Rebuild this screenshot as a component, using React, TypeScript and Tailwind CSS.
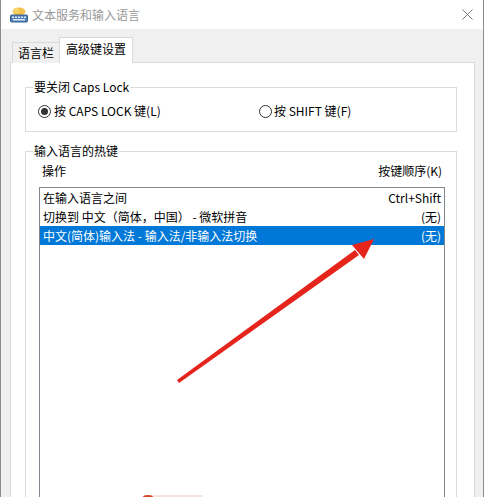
import React from "react";

const font = { fontFamily: '"Noto Sans CJK SC", "Noto Sans", sans-serif' };

const TitleIcon = () => (
  <svg width="18" height="16" viewBox="0 0 18 16">
    <ellipse cx="9" cy="4.5" rx="6.5" ry="4" fill="#f2c14e" />
    <ellipse cx="6" cy="3.5" rx="3" ry="2.5" fill="#f7d36b" />
    <rect x="0.5" y="8" width="17" height="7" rx="1" fill="#4f7fb8" stroke="#35608f" />
    <rect x="2" y="9.5" width="2" height="1.5" fill="#dfe9f5" />
    <rect x="5" y="9.5" width="2" height="1.5" fill="#dfe9f5" />
    <rect x="8" y="9.5" width="2" height="1.5" fill="#dfe9f5" />
    <rect x="11" y="9.5" width="2" height="1.5" fill="#dfe9f5" />
    <rect x="14" y="9.5" width="2" height="1.5" fill="#dfe9f5" />
    <rect x="3" y="12" width="12" height="1.5" fill="#dfe9f5" />
  </svg>
);

const Radio = ({ checked }: { checked?: boolean }) => (
  <span className="w-[13px] h-[13px] rounded-full border border-[#333] bg-white flex items-center justify-center shrink-0">
    {checked && <span className="w-[7px] h-[7px] rounded-full bg-[#333]" />}
  </span>
);

const rows = [
  { op: "在输入语言之间", key: "Ctrl+Shift" },
  { op: "切换到 中文（简体，中国） - 微软拼音", key: "(无)" },
  { op: "中文(简体)输入法 - 输入法/非输入法切换", key: "(无)", selected: true },
];

export default function App() {
  return (
    <div
      className="relative w-[486px] h-[497px] overflow-hidden bg-white text-[12px] leading-[16px] text-black flex"
      style={font}
    >
      <div className="w-[484px] h-full flex flex-col border-l border-r border-[#8c8c8c]">
        {/* title bar */}
        <div className="h-[29px] bg-white flex items-center pl-[9px] pr-[10px] shrink-0">
          <TitleIcon />
          <span className="ml-[4px] text-[#999]">文本服务和输入语言</span>
          <svg className="ml-auto" width="11" height="11" viewBox="0 0 11 11">
            <path d="M0.5 0.5 L10.5 10.5 M10.5 0.5 L0.5 10.5" stroke="#777" strokeWidth="1" />
          </svg>
        </div>

        <div className="flex-1 bg-[#f0f0f0] pl-[9px] pr-[8px] pt-[8px] flex flex-col">
          {/* tabs */}
          <div className="flex items-end h-[26px] pl-[2px] -mb-[1px] relative">
            <div className="h-[21px] px-[5px] flex items-center bg-[#f0f0f0] border border-b-0 border-[#d9d9d9]">
              语言栏
            </div>
            <div className="h-[26px] px-[6px] flex items-center bg-white border border-b-0 border-[#d9d9d9] -ml-[1px] pb-[3px]">
              高级键设置
            </div>
          </div>

          {/* panel */}
          <div className="flex-1 bg-white border border-[#d9d9d9] pl-[14px] pr-[17px] pt-[16px]">
            <fieldset className="border border-[#dcdcdc] pl-[7px] pr-[8px] pb-[12px]">
              <legend className="px-[1px]">要关闭 Caps Lock</legend>
              <div className="flex items-center h-[16px] mt-[8px] pl-[5px]">
                <div className="flex items-center w-[221px]">
                  <Radio checked />
                  <span className="ml-[3px]">按 CAPS LOCK 键(L)</span>
                </div>
                <div className="flex items-center">
                  <Radio />
                  <span className="ml-[2px]">按 SHIFT 键(F)</span>
                </div>
              </div>
            </fieldset>

            <fieldset className="mt-[11px] border border-[#dcdcdc] pl-[13px] pr-[11px] h-[400px]">
              <legend className="ml-[-6px] px-[1px]">输入语言的热键</legend>
              <div className="flex justify-between items-center h-[16px] mt-[4px] pl-[3px] pr-[3px]">
                <span>操作</span>
                <span>按键顺序(K)</span>
              </div>
              <div className="mt-[8px] border border-[#828790] h-[340px] bg-white">
                {rows.map((r) => (
                  <div
                    key={r.op}
                    className={`h-[19px] flex items-center justify-between pl-[3px] pr-[3px] ${
                      r.selected ? "bg-[#0078d7] text-white" : ""
                    }`}
                  >
                    <span>{r.op}</span>
                    <span>{r.key}</span>
                  </div>
                ))}
              </div>
            </fieldset>
          </div>
        </div>
      </div>

      {/* red arrow annotation */}
      <svg className="absolute left-0 top-0 pointer-events-none" width="486" height="497" viewBox="0 0 486 497">
        <polygon points="177,380 179,383 359,255 355,250" fill="#e5251c" />
        <polygon points="374,239 352,245 364,259" fill="#e5251c" />
        <ellipse cx="148" cy="497" rx="5" ry="2" fill="#d2451e" />
        <rect x="153" y="495" width="50" height="2" fill="#f6e2df" />
      </svg>
    </div>
  );
}
